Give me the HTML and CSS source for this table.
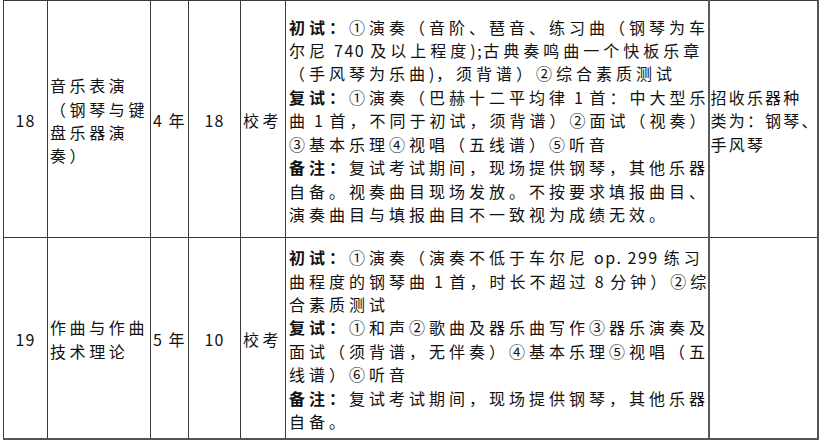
FILE: index.html
```html
<!DOCTYPE html>
<html lang="zh-CN">
<head>
<meta charset="utf-8">
<title>招生专业表</title>
<link rel="stylesheet" href="styles.css">
</head>
<body>
<table class="majors">
  <colgroup>
    <col class="c-no">
    <col class="c-name">
    <col class="c-years">
    <col class="c-plan">
    <col class="c-type">
    <col class="c-req">
    <col class="c-note">
  </colgroup>
  <tbody>
    <tr class="row-a">
      <td class="center">18</td>
      <td>音乐表演<br>（钢琴与键<br>盘乐器演<br>奏）</td>
      <td><span class="lat">4 </span>年</td>
      <td class="center">18</td>
      <td>校考</td>
      <td class="req"><b>初试：</b>①演奏（音阶、琶音、练习曲（钢琴为车<br>尔尼<span class="lat"> 740 </span>及以上程度<span class="lat">);</span>古典奏鸣曲一个快板乐章<br>（手风琴为乐曲<span class="lat">)</span>，须背谱）②综合素质测试<br><b>复试：</b>①演奏（巴赫十二平均律<span class="lat"> 1 </span>首：中大型乐<br>曲<span class="lat"> 1 </span>首，不同于初试，须背谱）②面试（视奏）<br>③基本乐理④视唱（五线谱）⑤听音<br><b>备注：</b>复试考试期间，现场提供钢琴，其他乐器<br>自备。视奏曲目现场发放。不按要求填报曲目、<br>演奏曲目与填报曲目不一致视为成绩无效。</td>
      <td class="note">招收乐器种<br>类为：钢琴、<br>手风琴</td>
    </tr>
    <tr class="row-b">
      <td class="center">19</td>
      <td>作曲与作曲<br>技术理论</td>
      <td><span class="lat">5 </span>年</td>
      <td class="center">10</td>
      <td>校考</td>
      <td class="req"><b>初试：</b>①演奏（演奏不低于车尔尼<span class="lat"> op. 299 </span>练习<br>曲程度的钢琴曲<span class="lat"> 1 </span>首，时长不超过<span class="lat"> 8 </span>分钟）②综<br>合素质测试<br><b>复试：</b>①和声②歌曲及器乐曲写作③器乐演奏及<br>面试（须背谱，无伴奏）④基本乐理⑤视唱（五<br>线谱）⑥听音<br><b>备注：</b>复试考试期间，现场提供钢琴，其他乐器<br>自备。</td>
      <td class="note"></td>
    </tr>
  </tbody>
</table>
</body>
</html>
```
FILE: styles.css
```css
html, body {
  margin: 0;
  padding: 0;
  background: #ffffff;
}

body {
  font-family: "Noto Sans CJK SC", "Noto Sans", sans-serif;
  color: #111111;
}

.majors {
  margin-left: 3px;
  width: 814px;
  table-layout: fixed;
  border-collapse: collapse;
  border-top: 1px solid #6a6a6a;
  border-left: 1px solid #404040;
  border-right: 2px solid #555555;
  border-bottom: 2px solid #555555;
}

.c-no { width: 44px; }
.c-name { width: 103px; }
.c-years { width: 38px; }
.c-plan { width: 52px; }
.c-type { width: 45px; }
.c-req { width: 423px; }
.c-note { width: 109px; }

.majors td {
  border: 1px solid #3a3a3a;
  padding: 4px 0 0 2px;
  vertical-align: middle;
  font-size: 16px;
  line-height: 23.4px;
  letter-spacing: 3.6px;
  white-space: nowrap;
  overflow: visible;
}

.majors td.center {
  text-align: center;
  padding-left: 0;
  letter-spacing: 1px;
}

.majors td.req {
  padding-left: 3px;
  letter-spacing: 4px;
}

.majors td.note {
  border-left: 2px solid #5a5a5a;
  padding-left: 1px;
  letter-spacing: 2.2px;
}

.majors .lat {
  letter-spacing: 1.5px;
}

.majors b {
  font-weight: 700;
}

.row-a { height: 237px; }
.row-b { height: 201px; }
```
